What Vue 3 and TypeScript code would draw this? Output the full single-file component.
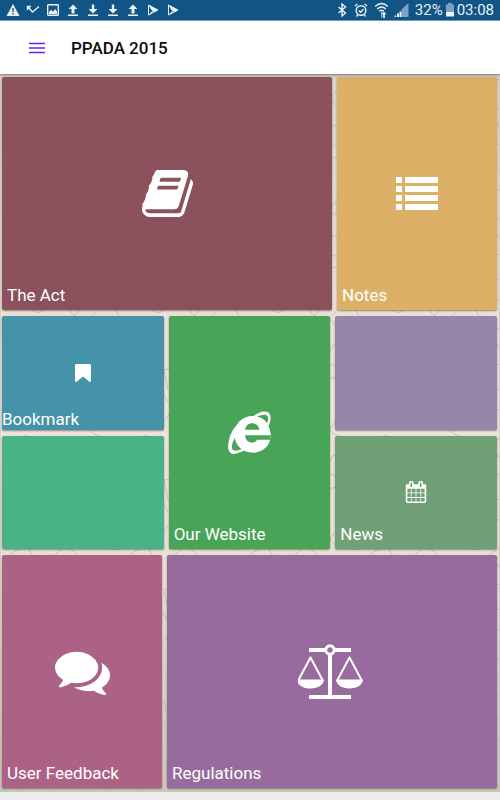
<script setup lang="ts">
interface Tile {
  id: string
  label: string
  name: string
  icon?: 'book' | 'list' | 'bookmark' | 'browser' | 'calendar' | 'comments' | 'scales'
  compact?: boolean
}

interface Row {
  id: string
  columns: Tile[][]
}

const rows: Row[] = [
  {
    id: 'wide-first',
    columns: [
      [{ id: 'act', label: 'The Act', name: 'The Act', icon: 'book' }],
      [{ id: 'notes', label: 'Notes', name: 'Notes', icon: 'list' }],
    ],
  },
  {
    id: 'thirds',
    columns: [
      [
        { id: 'bookmark', label: 'Bookmark', name: 'Bookmark', icon: 'bookmark', compact: true },
        { id: 'mint', label: '', name: 'Empty tile' },
      ],
      [{ id: 'website', label: 'Our Website', name: 'Our Website', icon: 'browser' }],
      [
        { id: 'lavender', label: '', name: 'Empty tile' },
        { id: 'news', label: 'News', name: 'News', icon: 'calendar' },
      ],
    ],
  },
  {
    id: 'wide-last',
    columns: [
      [{ id: 'feedback', label: 'User Feedback', name: 'User Feedback', icon: 'comments' }],
      [{ id: 'regulations', label: 'Regulations', name: 'Regulations', icon: 'scales' }],
    ],
  },
]
</script>

<template>
  <div class="screen">
    <div class="status">
      <div class="status-left">
        <svg viewBox="0 0 14 14"><path d="M7 1 13.500 13H.5z" /><path class="cut" d="M6.300 5h1.400v4H6.300zM6.300 10h1.400v1.400H6.300z" /></svg>
        <svg viewBox="0 0 14 14"><path class="line" d="M1.500 7V3.500H5M2 4l4.500 5L13 3.500" /></svg>
        <svg viewBox="0 0 14 14"><rect class="line" x="1.700" y="1.700" width="10.600" height="10.600" rx=".6" /><path d="M3 11V9l2-2.200 2 2L9.200 6 11 8.500V11z" /></svg>
        <svg viewBox="0 0 14 14"><path d="M7 1.500 11.500 6H8.500v4.500h-3V6h-3zM2 11.500h10V13H2z" /></svg>
        <svg viewBox="0 0 14 14"><path d="M5.800 1.500h2.400V6h3.300L7 10.500 2.500 6h3.300zM2 11.500h10V13H2z" /></svg>
        <svg viewBox="0 0 14 14"><path d="M5.800 1.500h2.400V6h3.300L7 10.500 2.500 6h3.300zM2 11.500h10V13H2z" /></svg>
        <svg viewBox="0 0 14 14"><path d="M7 1.500 11.500 6H8.500v4.500h-3V6h-3zM2 11.500h10V13H2z" /></svg>
        <svg v-for="n in 2" :key="n" viewBox="0 0 14 14"><path class="thin" d="M2.500 2v10L12 7z" /><path d="M2.500 2 12 7 8 9 5 6.500z" /><path class="thin" d="M3 12 9 5.500M3 2l6 6.500" /></svg>
      </div>
      <div class="status-right">
        <svg class="bluetooth" viewBox="0 0 14 14"><path class="line" d="m3.500 4 7 6L7 13V1l3.500 3-7 6" /></svg>
        <svg class="alarm" viewBox="0 0 14 14"><circle class="line" cx="7" cy="7.500" r="4.800" /><path class="line" d="m4.800 7.500 1.700 1.700 3-3M1 3l2.500-2M13 3l-2.500-2M3.500 12l-1 1.500M10.500 12l1 1.500" /></svg>
        <svg class="wifi" viewBox="0 0 14 16"><path class="line" d="M.7 4.500q6.300-6 12.600 0M2.700 7q4.300-4 8.600 0M4.800 9.200q2.200-2 4.400 0" /><path d="M6.500 9.500h1.400v6H6.500z" opacity=".6" /><path d="M9.400 9.500 12 12.300h-1.600V16H8.600v-3.700H7z" /></svg>
        <svg class="signal" viewBox="0 0 16 14"><path class="faint" d="M8.500 6.500 15.500 0v14h-7z" /><path d="M1.500 12.500h1.800V14H1.500zM4 10.500h2V14H4zM6.500 8.500h2V14h-2z" /></svg>
        <span>32%</span>
        <svg class="battery" viewBox="0 0 8 14"><path class="faint" d="M0 1.500h2V0h4v1.500h2V9H0z" /><path d="M0 9h8v4.500H0z" /></svg>
        <span>03:08</span>
      </div>
    </div>

    <header class="toolbar">
      <button class="menu" type="button" aria-label="Open menu">
        <svg viewBox="0 0 16 12"><path d="M0 1.500h16M0 6h16M0 10.500h16" /></svg>
      </button>
      <h1>PPADA 2015</h1>
    </header>

    <main class="board">
      <svg class="doodles" aria-hidden="true">
        <defs>
          <pattern id="sketches" width="120" height="110" patternUnits="userSpaceOnUse">
            <path d="M4 12q12-14 24 0t22-3M60 4l14 18 14-15zM94 20q12-20 24 0t-12 14-12-14M10 40l16-9 10 16-15 9zM52 45q14-22 28 0t-28 12M93 51l20 6-8 19-20-8zM2 80q14-20 28 0T2 94M44 76l20-5 4 20-20 5zM78 95q18-22 36-4M30 103l10-9 8 14" />
          </pattern>
        </defs>
        <rect width="100%" height="100%" fill="url(#sketches)" />
      </svg>

      <div v-for="row in rows" :key="row.id" class="row" :class="row.id">
        <div v-for="(column, index) in row.columns" :key="index" class="column">
          <button
            v-for="tile in column"
            :key="tile.id"
            type="button"
            class="tile"
            :class="[tile.id, { compact: tile.compact }]"
            :aria-label="tile.name"
          >
            <svg v-if="tile.icon === 'book'" class="icon large" viewBox="0 0 1792 1792">
              <path d="M1703 478q40 57 18 129l-275 906q-19 64-76.500 107.500t-122.500 43.500h-923q-77 0-148.500-53.500t-99.500-131.500q-24-67-2-127 0-4 3-27t4-37q1-8-3-21.500t-3-19.500q2-11 8-21t16.500-23.500 16.500-23.500q23-38 45-91.500t30-91.500q3-10 .5-30t-.5-28q3-11 17-28t17-23q21-36 42-92t25-90q1-9-2.500-32t.5-28q4-13 22-30.500t22-22.500q19-26 42.500-84.500t27.500-96.500q1-8-3-25.500t-2-26.500q2-8 9-18t18-23 17-21q8-12 16.500-30.500t15-35 16-36 19.500-32 26.500-23.500 36-11.500 47.500 5.500l-1 3q38-9 51-9h761q74 0 114 56t18 130l-274 906q-36 119-71.500 153.500t-128.500 34.500h-869q-27 0-38 15-11 16-1 43 24 70 144 70h923q29 0 56-15.500t35-41.500l300-987q7-22 5-57 38 15 59 43zm-1064 2q-4 13 2 22.500t20 9.500h608q13 0 25.500-9.500t16.500-22.500l21-64q4-13-2-22.500t-20-9.500h-608q-13 0-25.500 9.500t-16.500 22.500zm-83 256q-4 13 2 22.500t20 9.500h608q13 0 25.500-9.500t16.500-22.500l21-64q4-13-2-22.500t-20-9.500h-608q-13 0-25.500 9.500t-16.500 22.500z" />
            </svg>
            <svg v-else-if="tile.icon === 'list'" class="icon list" viewBox="0 0 42 34">
              <path d="M0 0h6v6H0zM9 0h33v6H9zM0 9h6v6H0zM9 9h33v6H9zM0 18h6v6H0zM9 18h33v6H9zM0 27h6v6H0zM9 27h33v6H9z" />
            </svg>
            <svg v-else-if="tile.icon === 'bookmark'" class="icon ribbon" viewBox="0 0 16 18">
              <path d="M1.500 0h13q1.500 0 1.500 1.500v15.200q0 1.800-1.600 1L8 12.500 1.600 17.700q-1.600.8-1.600-1V1.500Q0 0 1.500 0z" />
            </svg>
            <svg v-else-if="tile.icon === 'browser'" class="icon browser" viewBox="-6 0 195 195">
              <path d="M155 119Q156 103 153 92C147 63 127 48 101 48 70 48 46 72 46 103c0 32 24 55 55 55 24 0 43-12 51-34l2-5h-40c-3 6-8 9-14 9-13 0-21-9-22-22h76zM78 89c2-11 10-19 22-19s20 8 21 19z" />
              <path d="M104 48C120 35 144 29 152 42c5 9 3 22-3 36l-5-8c4-10 5-18 1-22-6-7-20-3-33 3z" />
              <path d="M89 51C58 63 35 91 29 124c-5 24 1 39 17 38 11-1 23-7 36-14l-7-5c-12 7-25 11-31 8-9-5-5-21 2-35 9-18 23-40 43-65z" />
            </svg>
            <svg v-else-if="tile.icon === 'calendar'" class="icon calendar" viewBox="0 0 1792 1792">
              <path d="M192 1664h288v-288h-288v288zm352 0h320v-288h-320v288zm-352-352h288v-320h-288v320zm352 0h320v-320h-320v320zm-352-384h288v-288h-288v288zm736 736h320v-288h-320v288zm-384-736h320v-288h-320v288zm768 736h288v-288h-288v288zm-384-352h320v-320h-320v320zm-352-864v-288q0-13-9.500-22.500t-22.500-9.500h-64q-13 0-22.500 9.500t-9.500 22.500v288q0 13 9.500 22.500t22.500 9.500h64q13 0 22.500-9.500t9.500-22.500zm736 864h288v-320h-288v320zm-384-384h320v-288h-320v288zm384 0h288v-288h-288v288zm32-480v-288q0-13-9.500-22.500t-22.500-9.500h-64q-13 0-22.500 9.500t-9.500 22.500v288q0 13 9.500 22.500t22.500 9.500h64q13 0 22.500-9.500t9.500-22.500zm384-64v1280q0 52-38 90t-90 38h-1408q-52 0-90-38t-38-90v-1280q0-52 38-90t90-38h128v-96q0-66 47-113t113-47h64q66 0 113 47t47 113v96h384v-96q0-66 47-113t113-47h64q66 0 113 47t47 113v96h128q52 0 90 38t38 90z" />
            </svg>
            <svg v-else-if="tile.icon === 'comments'" class="icon large" viewBox="0 0 1792 1792">
              <path d="M1408 768q0 139-94 257t-256.500 186.500-353.500 68.500q-86 0-176-16-124 88-278 128-36 9-86 16h-3q-11 0-20.500-8t-11.500-21q-1-3-1-6.500t.5-6.500 2-6l2.500-5 3.500-5.500 4-5 4.500-5 4-4.500q5-6 23-25t26-29.500 22.500-29 25-38.500 20.500-44q-124-72-195-177t-71-224q0-139 94-257t256.500-186.500 353.500-68.500 353.500 68.500 256.500 186.500 94 257zm384 256q0 120-71 224.500t-195 176.500q10 24 20.500 44t25 38.500 22.500 29 26 29.500 23 25q1 1 4 4.500t4.500 5 4 5 3.500 5.500l2.500 5 2 6 .5 6.500-1 6.500q-3 14-13 22t-22 7q-50-7-86-16-154-40-278-128-90 16-176 16-271 0-472-132 58 4 88 4 161 0 309-45t264-129q125-92 192-212t67-257q0-77-23-152 129 71 204 178t75 230z" />
            </svg>
            <svg v-else-if="tile.icon === 'scales'" class="icon scales" viewBox="2 0 68 56">
              <path d="M13 4h17v4H13zM38 4h17v4H38zM32 10h4v38h-4zM13 51h42v4H13zM32 46h4v6h-4z" />
              <circle class="pivot" cx="34" cy="6" r="4.200" />
              <path class="pan-line" d="M2.500 36 14.500 13.500 26.500 36M41.500 36l12-22.500 12 22.500" />
              <path d="M1 35.500h27c0 5-6 9-13.500 9S1 40.500 1 35.500zM40 35.500h27c0 5-6 9-13.500 9S40 40.500 40 35.500z" />
            </svg>
            <span v-if="tile.label" class="label">{{ tile.label }}</span>
          </button>
        </div>
      </div>
    </main>
  </div>
</template>

<style>
body {
  margin: 0;
}
</style>

<style scoped>
.screen {
  display: flex;
  flex-direction: column;
  min-height: 100vh;
  box-sizing: border-box;
  padding-bottom: 8px;
  background: #eeeeee;
  font-family: Roboto, "Liberation Sans", sans-serif;
}

.status {
  display: flex;
  align-items: center;
  justify-content: space-between;
  height: 21px;
  padding: 0 6px;
  border-bottom: 1px solid #8ba6bd;
  box-sizing: border-box;
  background: #115486;
  color: #e9f1f7;
  font-size: 15px;
  line-height: 20px;
}

.status svg {
  width: 14px;
  height: 14px;
  fill: #e9f1f7;
}

.status .line,
.status .thin {
  fill: none;
  stroke: #e9f1f7;
  stroke-width: 1.4;
}

.status .thin {
  stroke-width: 1;
}

.status .cut {
  fill: #115486;
}

.status .faint {
  fill: #7ba2c0;
}

.status-left,
.status-right {
  display: flex;
  align-items: center;
}

.status-left {
  gap: 6px;
}

.status-right {
  gap: 3px;
}

.status .alarm {
  margin: 0 3px 0 2px;
}

.status .wifi {
  width: 15px;
  height: 16px;
}

.status .signal {
  width: 16px;
  margin: 0 3px 0 1px;
}

.status .battery {
  width: 8px;
}

.toolbar {
  position: relative;
  display: flex;
  align-items: center;
  gap: 25px;
  height: 53px;
  padding: 0 28px;
  box-sizing: border-box;
  background: #ffffff;
  box-shadow: 0 1px 3px rgba(0, 0, 0, 0.45);
  z-index: 1;
}

.menu {
  display: flex;
  padding: 0 1px;
  border: 0;
  background: none;
}

.menu svg {
  width: 16px;
  height: 12px;
  fill: none;
  stroke: #7a1ee0;
  stroke-width: 1.4;
}

h1 {
  margin: 0;
  color: #0c0c0c;
  font-size: 17px;
  font-weight: 500;
  line-height: 24px;
}

.board {
  position: relative;
  display: grid;
  flex: 1;
  grid-template-rows: repeat(3, 1fr);
  gap: 6px;
  padding: 3px 3px 4px 2px;
  background: linear-gradient(#ddd4c9, #efe5dc 45%, #e8ded3 72%, #cfc6bb);
}

.doodles {
  position: absolute;
  inset: 0;
  width: 100%;
  height: 100%;
  fill: none;
  stroke: #c9c0b6;
  stroke-width: 1;
}

.row {
  position: relative;
  display: grid;
  gap: 5px;
}

.wide-first {
  grid-template-columns: 33fr 16fr;
}

.thirds {
  grid-template-columns: repeat(3, 1fr);
}

.wide-last {
  grid-template-columns: 16fr 33fr;
}

.column {
  display: grid;
  grid-auto-rows: 1fr;
  gap: 6px;
}

.tile {
  position: relative;
  display: flex;
  align-items: center;
  justify-content: center;
  padding: 0;
  border: 0;
  border-radius: 2px;
  box-shadow: 0 1px 2px rgba(0, 0, 0, 0.4);
  color: #ffffff;
  font: inherit;
}

.label {
  position: absolute;
  bottom: 4px;
  left: 5px;
  font-size: 17px;
  line-height: 22px;
}

.compact .label {
  bottom: 0;
  left: 0;
}

.icon {
  fill: #ffffff;
}

.large {
  width: 55px;
  height: 55px;
}

.list {
  width: 42px;
  height: 34px;
}

.ribbon {
  width: 16px;
  height: 18px;
}

.browser {
  width: 65px;
  height: 65px;
}

.calendar {
  width: 22px;
  height: 22px;
}

.scales {
  width: 68px;
  height: 56px;
}

.pivot {
  fill: none;
  stroke: #ffffff;
  stroke-width: 3;
}

.pan-line {
  fill: none;
  stroke: #ffffff;
  stroke-linejoin: round;
  stroke-width: 2;
}

.act {
  background: #8b525d;
}

.notes {
  background: #dcb067;
}

.bookmark {
  background: #4493a8;
}

.mint {
  background: #49b287;
}

.website {
  background: #48a457;
}

.lavender {
  background: #9786ac;
}

.news {
  background: #70a075;
}

.feedback {
  background: #ac6285;
}

.regulations {
  background: #986b9e;
}
</style>
